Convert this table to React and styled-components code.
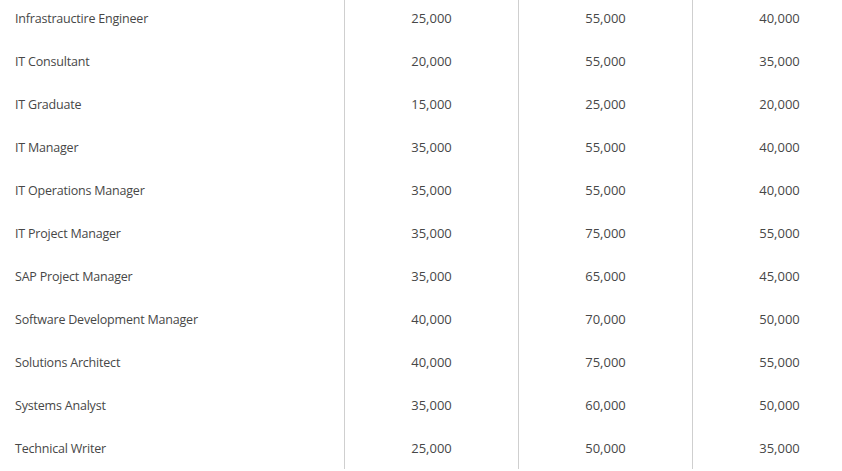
import React from 'react';
import styled, { createGlobalStyle } from 'styled-components';

const GlobalStyle = createGlobalStyle`
    html, body {
        margin: 0;
        padding: 0;
        background: #fff;
        overflow: hidden;
    }
`;

const Table = styled.div`
    display: grid;
    grid-template-columns: 344px 174px 174px 174px;
    grid-auto-rows: 43px;
    width: 866px;
    margin-top: -4px;
    font-family: "Open Sans", "Noto Sans", sans-serif;
    font-size: 13px;
    color: #474747;
`;

const Row = styled.div`
    display: contents;
`;

const NameCell = styled.div`
    display: flex;
    align-items: center;
    padding: 1px 15px 0;
    font-size: 12.5px;
    letter-spacing: -0.2px;
`;

const NumCell = styled.div`
    display: flex;
    align-items: center;
    justify-content: center;
    box-sizing: border-box;
    border-left: 1px solid #cfcfcf;
`;

const rows = [
    ['Infrastrauctire Engineer', '25,000', '55,000', '40,000'],
    ['IT Consultant', '20,000', '55,000', '35,000'],
    ['IT Graduate', '15,000', '25,000', '20,000'],
    ['IT Manager', '35,000', '55,000', '40,000'],
    ['IT Operations Manager', '35,000', '55,000', '40,000'],
    ['IT Project Manager', '35,000', '75,000', '55,000'],
    ['SAP Project Manager', '35,000', '65,000', '45,000'],
    ['Software Development Manager', '40,000', '70,000', '50,000'],
    ['Solutions Architect', '40,000', '75,000', '55,000'],
    ['Systems Analyst', '35,000', '60,000', '50,000'],
    ['Technical Writer', '25,000', '50,000', '35,000'],
];

const App = () => (
    <>
        <GlobalStyle />
        <Table>
            {rows.map(([role, min, max, avg]) => (
                <Row key={role}>
                    <NameCell>{role}</NameCell>
                    <NumCell>{min}</NumCell>
                    <NumCell>{max}</NumCell>
                    <NumCell>{avg}</NumCell>
                </Row>
            ))}
        </Table>
    </>
);

export default App;
